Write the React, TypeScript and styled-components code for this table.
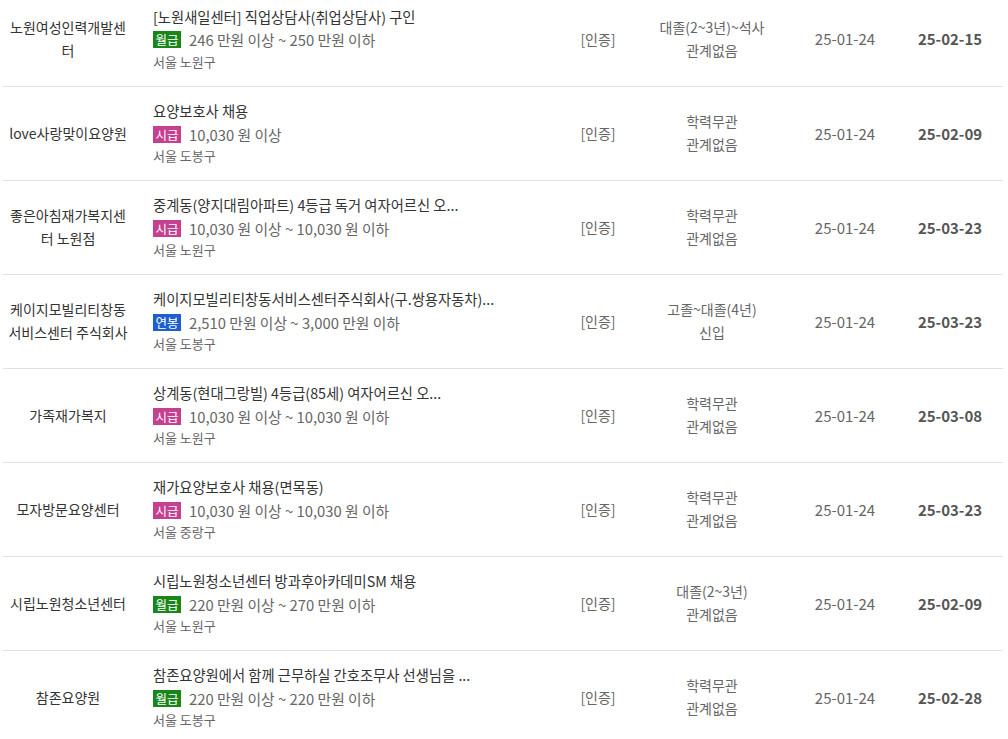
import styled, { createGlobalStyle } from "styled-components"

const GlobalStyle = createGlobalStyle`
  body {
    margin: 0;
    background: #fff;
    font-family: "Noto Sans CJK KR", "Noto Sans", sans-serif;
    color: #333;
  }
`

type PayType = "월급" | "시급" | "연봉"

const jobs: {
  company: string
  title: string
  pay: PayType
  salary: string
  area: string
  edu: string
  career: string
  reg: string
  end: string
}[] = [
  { company: "노원여성인력개발센터", title: "[노원새일센터] 직업상담사(취업상담사) 구인", pay: "월급", salary: "246 만원 이상 ~ 250 만원 이하", area: "서울 노원구", edu: "대졸(2~3년)~석사", career: "관계없음", reg: "25-01-24", end: "25-02-15" },
  { company: "love사랑맞이요양원", title: "요양보호사 채용", pay: "시급", salary: "10,030 원 이상", area: "서울 도봉구", edu: "학력무관", career: "관계없음", reg: "25-01-24", end: "25-02-09" },
  { company: "좋은아침재가복지센터 노원점", title: "중계동(양지대림아파트) 4등급 독거 여자어르신 오...", pay: "시급", salary: "10,030 원 이상 ~ 10,030 원 이하", area: "서울 노원구", edu: "학력무관", career: "관계없음", reg: "25-01-24", end: "25-03-23" },
  { company: "케이지모빌리티창동서비스센터 주식회사", title: "케이지모빌리티창동서비스센터주식회사(구.쌍용자동차)...", pay: "연봉", salary: "2,510 만원 이상 ~ 3,000 만원 이하", area: "서울 도봉구", edu: "고졸~대졸(4년)", career: "신입", reg: "25-01-24", end: "25-03-23" },
  { company: "가족재가복지", title: "상계동(현대그랑빌) 4등급(85세) 여자어르신 오...", pay: "시급", salary: "10,030 원 이상 ~ 10,030 원 이하", area: "서울 노원구", edu: "학력무관", career: "관계없음", reg: "25-01-24", end: "25-03-08" },
  { company: "모자방문요양센터", title: "재가요양보호사 채용(면목동)", pay: "시급", salary: "10,030 원 이상 ~ 10,030 원 이하", area: "서울 중랑구", edu: "학력무관", career: "관계없음", reg: "25-01-24", end: "25-03-23" },
  { company: "시립노원청소년센터", title: "시립노원청소년센터 방과후아카데미SM 채용", pay: "월급", salary: "220 만원 이상 ~ 270 만원 이하", area: "서울 노원구", edu: "대졸(2~3년)", career: "관계없음", reg: "25-01-24", end: "25-02-09" },
  { company: "참존요양원", title: "참존요양원에서 함께 근무하실 간호조무사 선생님을 ...", pay: "월급", salary: "220 만원 이상 ~ 220 만원 이하", area: "서울 도봉구", edu: "학력무관", career: "관계없음", reg: "25-01-24", end: "25-02-28" },
]

const payColors: Record<PayType, string> = {
  월급: "#1a861a",
  시급: "#c5408e",
  연봉: "#1d5fd1",
}

const App = () => {
  return (
    <>
      <GlobalStyle />
      <Table>
        <tbody>
          {jobs.map((job, i) => (
            <Row key={i}>
              <Company>{job.company}</Company>
              <Info>
                <Title>{job.title}</Title>
                <SalaryLine>
                  <Badge $color={payColors[job.pay]}>{job.pay}</Badge>
                  {job.salary}
                </SalaryLine>
                <Area>{job.area}</Area>
              </Info>
              <Cert>[인증]</Cert>
              <Edu>
                {job.edu}
                <br />
                {job.career}
              </Edu>
              <RegDate>{job.reg}</RegDate>
              <EndDate>{job.end}</EndDate>
            </Row>
          ))}
        </tbody>
      </Table>
    </>
  )
}

export default App

const Table = styled.table`
  width: 1000px;
  margin: -8px 0 0 3px;
  border-collapse: collapse;
  table-layout: fixed;
`

const Row = styled.tr`
  height: 94px;
  border-bottom: 1px solid #e1e1e1;

  td {
    vertical-align: middle;
    padding: 0;
  }
`

const Company = styled.td`
  width: 122px;
  padding: 0 4px !important;
  text-align: center;
  font-size: 14px;
  line-height: 23px;
  color: #333;
  word-break: normal;
`

const Info = styled.td`
  width: 402px;
  padding-left: 20px !important;
`

const Title = styled.div`
  font-size: 14.3px;
  line-height: 22px;
  color: #333;
  white-space: nowrap;
`

const SalaryLine = styled.div`
  display: flex;
  align-items: center;
  gap: 8px;
  height: 24px;
  font-size: 14.8px;
  color: #666;
`

const Badge = styled.span<{ $color: string }>`
  display: inline-flex;
  align-items: center;
  justify-content: center;
  width: 28px;
  height: 17px;
  background: ${p => p.$color};
  color: #fff;
  font-size: 12.5px;
`

const Area = styled.div`
  font-size: 13px;
  line-height: 20px;
  color: #666;
`

const Cert = styled.td`
  width: 86px;
  text-align: center;
  font-size: 14px;
  color: #666;
`

const Edu = styled.td`
  width: 142px;
  text-align: center;
  font-size: 14px;
  line-height: 23px;
  color: #666;
`

const RegDate = styled.td`
  width: 124px;
  text-align: center;
  font-size: 15px;
  color: #666;
`

const EndDate = styled.td`
  width: 86px;
  padding-right: 10px !important;
  text-align: center;
  font-size: 15px;
  font-weight: 600;
  color: #555;
`
